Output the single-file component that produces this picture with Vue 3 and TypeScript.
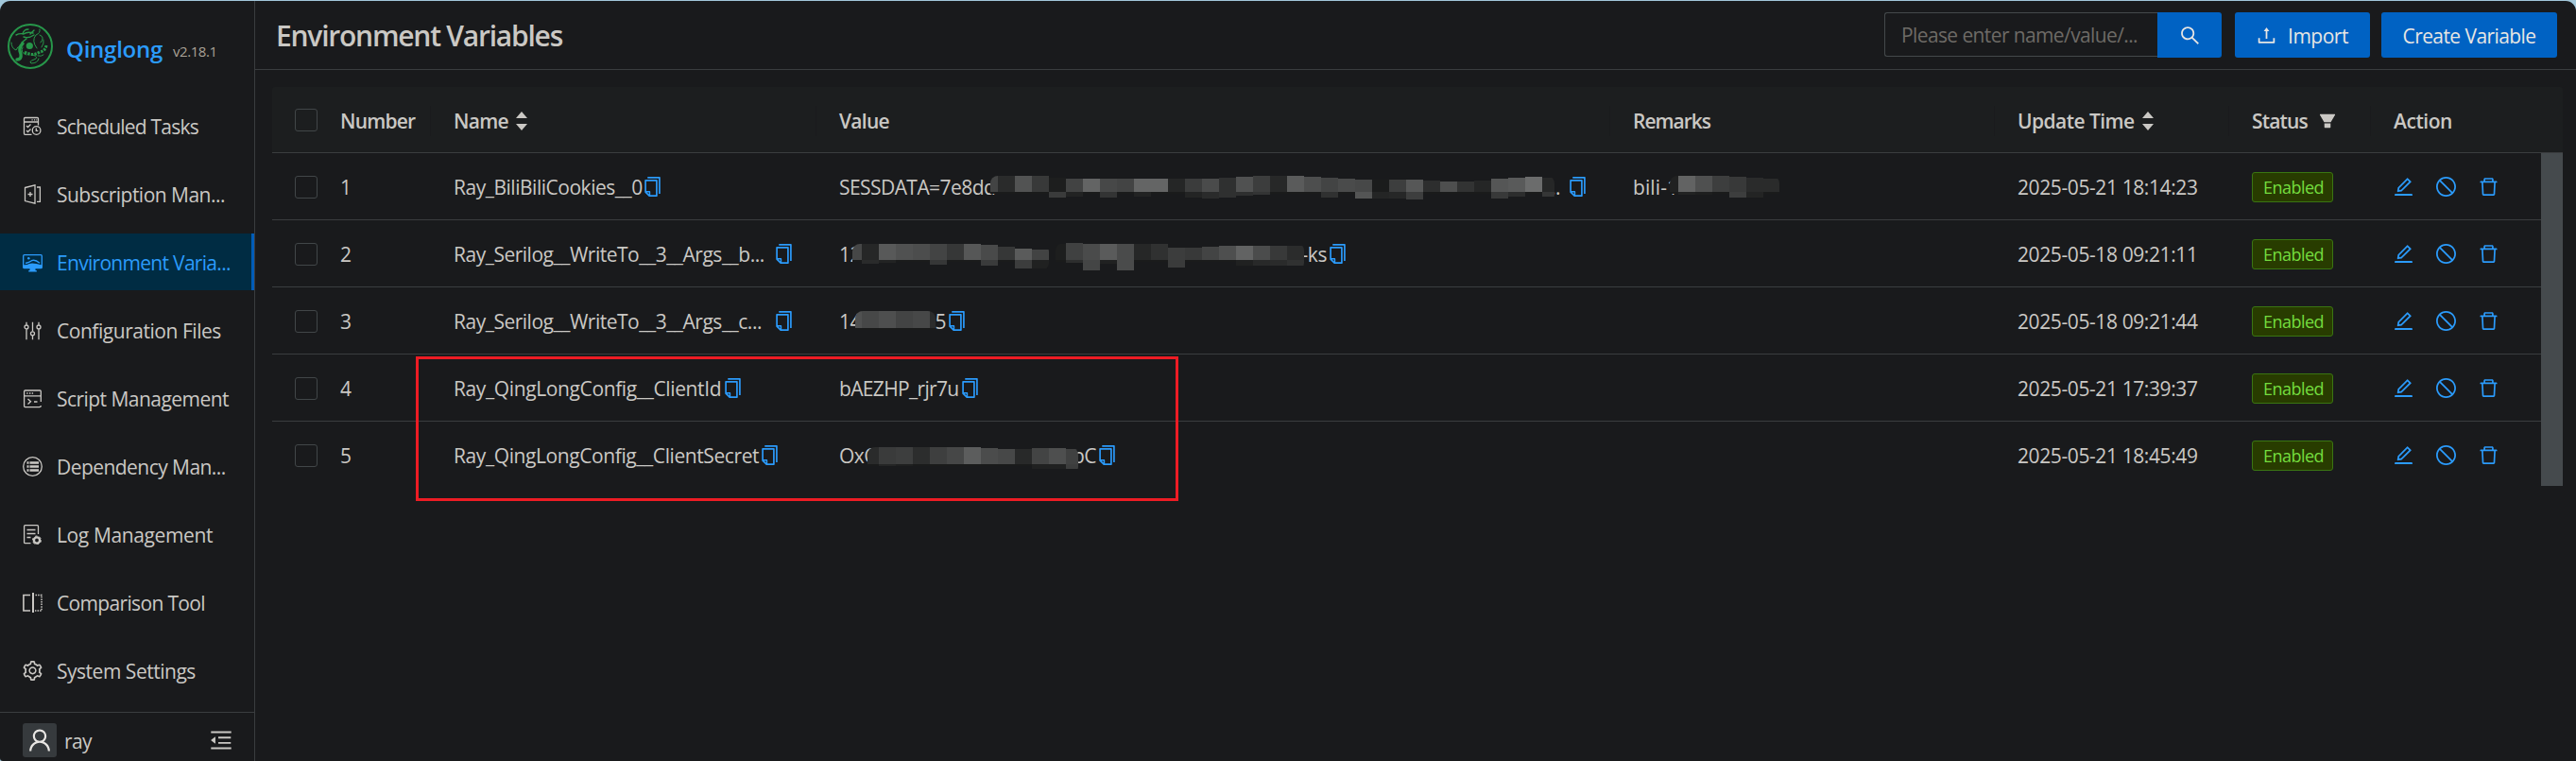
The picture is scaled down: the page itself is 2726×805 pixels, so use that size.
<script setup lang="ts">
interface MenuItem { key: string; label: string; ls: number }
/** One pixelated block: [gray level, top inset, lower gray level, lower height] */
type Block = [number, number, number?, number?]
interface Mosaic { x: number; top: number; lead: number; height: number; blocks: Block[]; tail: number }
interface Cell { head: string; ls: number; tail?: string; width?: number; gap?: number; mosaics?: Mosaic[] }
interface Row { name: Cell; value: Cell; remark?: Cell; time: string }

const menu: MenuItem[] = [
  { key: 'task', label: 'Scheduled Tasks', ls: -0.78 },
  { key: 'book', label: 'Subscription Man...', ls: -0.52 },
  { key: 'env', label: 'Environment Varia...', ls: -0.7 },
  { key: 'config', label: 'Configuration Files', ls: -0.46 },
  { key: 'script', label: 'Script Management', ls: -0.54 },
  { key: 'list', label: 'Dependency Man...', ls: -0.55 },
  { key: 'log', label: 'Log Management', ls: -0.38 },
  { key: 'diff', label: 'Comparison Tool', ls: -0.66 },
  { key: 'setting', label: 'System Settings', ls: -0.48 },
]
const active = 'env'

const rows: Row[] = [
  {
    name: { head: 'Ray_BiliBiliCookies__0', ls: -0.48, width: 200 },
    value: {
      head: 'SESSDATA=7e8dd', ls: -0.56, tail: '...', width: 763, gap: 8,
      mosaics: [{
        x: 160, top: 24, lead: 8, height: 17, tail: 13,
        blocks: [
          [67, 0], [42, 0], [82, 0], [56, 0], [29, 2, 58, 6], [66, 3, 34, 5], [99, 3], [71, 3, 51, 6], [67, 3], [100, 3, 34, 5], [100, 3],
          [37, 3], [59, 3, 35, 6], [74, 3, 42, 7], [47, 2, 47, 6], [80, 1, 46, 4], [60, 0, 51, 3], [39, 0], [90, 0], [77, 1],
          [67, 2, 48, 6], [74, 3], [71, 4, 84, 7], [27, 4, 36, 7], [61, 4, 38, 7], [86, 4, 61, 8], [45, 5], [78, 6], [50, 6],
          [37, 5], [85, 3, 56, 7], [89, 2, 44, 5], [107, 1], [38, 2, 53, 5],
        ],
      }],
    },
    remark: {
      head: 'bili-1', ls: 0.1,
      mosaics: [{ x: 39, top: 24, lead: 9, height: 17, tail: 17, blocks: [[32, 0], [98, 0, 34, 3], [79, 0, 30, 3], [61, 0], [56, 1, 61, 6], [42, 2, 35, 6], [42, 3]] }],
    },
    time: '2025-05-21 18:14:23',
  },
  {
    name: { head: 'Ray_Serilog__WriteTo__3__Args__b...', ls: -0.49, width: 329, gap: 10 },
    value: {
      head: '12', ls: -0.4, tail: '-ks', width: 516, gap: 1,
      mosaics: [
        { x: 14, top: 25, lead: 10, height: 17, tail: 18, blocks: [[70, 0], [38, 0, 42, 4], [88, 0, 34, 3], [80, 0], [76, 0], [67, 0, 54, 5], [54, 0], [86, 0], [73, 1, 58, 6], [54, 3], [90, 5, 60, 9], [66, 6, 32, 9]] },
        { x: 229, top: 24, lead: 11, height: 18, tail: 18, blocks: [[29, 1], [64, 0, 45, 3], [74, 1, 68, 11], [90, 1, 32, 4], [74, 1, 74, 11], [38, 1], [48, 1], [60, 5, 58, 8], [56, 5], [67, 4], [78, 3], [98, 3, 32, 6], [75, 3, 40, 6], [56, 3, 42, 6], [43, 3, 48, 6]] },
      ],
    },
    time: '2025-05-18 09:21:11',
  },
  {
    name: { head: 'Ray_Serilog__WriteTo__3__Args__c...', ls: -0.49, width: 329, gap: 10 },
    value: {
      head: '14', ls: -0.4, tail: '5', width: 113, gap: 1,
      mosaics: [{ x: 17, top: 25, lead: 7, height: 18, tail: 6, blocks: [[80, 0], [71, 0], [78, 0], [67, 0], [71, 0], [43, 0]] }],
    },
    time: '2025-05-18 09:21:44',
  },
  {
    name: { head: 'Ray_QingLongConfig__ClientId', ls: -0.38, width: 285 },
    value: { head: 'bAEZHP_rjr7u', ls: -0.66, width: 128 },
    time: '2025-05-21 17:39:37',
  },
  {
    name: { head: 'Ray_QingLongConfig__ClientSecret', ls: -0.41, width: 324 },
    value: {
      head: 'OxC', ls: -0.5, tail: 'pC', width: 272, gap: 1,
      mosaics: [{ x: 30, top: 27, lead: 12, height: 18, tail: 13, blocks: [[42, 0], [58, 0, 36, 2], [61, 0, 30, 2], [44, 0], [62, 0], [70, 0], [92, 0], [75, 1], [71, 2], [40, 2], [67, 1, 32, 5], [78, 1, 32, 5], [64, 2, 60, 5]] }],
    },
    time: '2025-05-21 18:45:49',
  },
]

const BLOCK = 18
const blockX = (m: Mosaic, i: number) => (i === 0 ? 0 : m.lead + (i - 1) * BLOCK)
const blockW = (m: Mosaic, i: number) => (i === 0 ? m.lead : i === m.blocks.length - 1 ? m.tail : BLOCK)
const mosaicW = (m: Mosaic) => m.lead + (m.blocks.length - 2) * BLOCK + m.tail
const shade = (g = 26) => `rgb(${g},${g + 1},${g + 1})`

const glyphs: Record<string, string> = {
  copy: 'M832 64H296c-4.4 0-8 3.6-8 8v56c0 4.4 3.6 8 8 8h496v688c0 4.4 3.6 8 8 8h56c4.4 0 8-3.6 8-8V96c0-17.7-14.3-32-32-32zM704 192H192c-17.7 0-32 14.3-32 32v530.7c0 8.5 3.4 16.6 9.4 22.6l173.3 173.3c2.2 2.2 4.7 4 7.4 5.5v1.9h4.2c3.5 1.3 7.2 2 11 2H704c17.7 0 32-14.3 32-32V224c0-17.7-14.3-32-32-32zM350 856.2L263.9 770H350v86.2zM664 888H414V746c0-22.1-17.9-40-40-40H232V264h432v624z',
  edit: 'M257.7 752c2 0 4-.2 6-.5L431.9 722c2-.4 3.9-1.3 5.3-2.8l423.9-423.9a9.96 9.96 0 000-14.1L694.9 114.9c-1.9-1.9-4.4-2.9-7.1-2.9s-5.2 1-7.1 2.9L256.8 538.8c-1.5 1.5-2.4 3.3-2.8 5.3l-29.5 168.2a33.5 33.5 0 009.4 29.8c6.6 6.4 14.9 9.9 23.8 9.9zm67.4-174.4L687.8 215l73.3 73.3-362.7 362.6-88.9 15.7 15.6-89zM880 836H144c-17.7 0-32 14.3-32 32v36c0 4.4 3.6 8 8 8h784c4.4 0 8-3.6 8-8v-36c0-17.7-14.3-32-32-32z',
  stop: 'M512 64C264.6 64 64 264.6 64 512s200.6 448 448 448 448-200.6 448-448S759.4 64 512 64zm0 820c-205.4 0-372-166.6-372-372 0-89 31.3-170.8 83.5-234.8l523.3 523.3C682.8 852.7 601 884 512 884zm288.5-137.2L277.2 223.5C341.2 171.3 423 140 512 140c205.4 0 372 166.6 372 372 0 89-31.3 170.8-83.5 234.8z',
  trash: 'M360 184h-8c4.4 0 8-3.6 8-8v8h304v-8c0 4.4 3.6 8 8 8h-8v72h72v-80c0-35.3-28.7-64-64-64H352c-35.3 0-64 28.7-64 64v80h72v-72zm504 72H160c-17.7 0-32 14.3-32 32v32c0 4.4 3.6 8 8 8h60.4l24.7 523c1.6 34.1 29.8 61 63.9 61h454c34.2 0 62.3-26.8 63.9-61l24.7-523H888c4.4 0 8-3.6 8-8v-32c0-17.7-14.3-32-32-32zM731.3 840H292.7l-24.2-512h487l-24.2 512z',
  search: 'M909.6 854.5L649.9 594.8C690.2 542.7 712 479 712 412c0-80.2-31.3-155.4-87.9-212.1-56.6-56.7-132-87.9-212.1-87.9s-155.5 31.3-212.1 87.9C143.2 256.5 112 331.8 112 412c0 80.1 31.3 155.5 87.9 212.1C256.5 680.8 331.8 712 412 712c67 0 130.6-21.8 182.7-62l259.7 259.6a8.2 8.2 0 0011.6 0l43.6-43.5a8.2 8.2 0 000-11.6zM570.4 570.4C528 612.7 471.8 636 412 636s-116-23.3-158.4-65.6C211.3 528 188 471.8 188 412s23.3-116.1 65.6-158.4C296 211.3 352.2 188 412 188s116.1 23.2 158.4 65.6S636 352.2 636 412s-23.3 116.1-65.6 158.4z',
  upload: 'M400 317.7h73.9V656c0 4.4 3.6 8 8 8h60c4.4 0 8-3.6 8-8V317.7H624c6.7 0 10.4-7.7 6.3-12.9L518.3 163a8 8 0 00-12.6 0l-112 141.7c-4.1 5.3-.4 13 6.3 13zM878 626h-60c-4.4 0-8 3.6-8 8v154H214V634c0-4.4-3.6-8-8-8h-60c-4.4 0-8 3.6-8 8v198c0 17.7 14.3 32 32 32h684c17.7 0 32-14.3 32-32V634c0-4.4-3.6-8-8-8z',
  user: 'M858.5 763.6a374 374 0 00-80.6-119.5 375.63 375.63 0 00-119.5-80.6c-.4-.2-.8-.3-1.2-.5C719.5 518 760 444.7 760 362c0-137-111-248-248-248S264 225 264 362c0 82.7 40.5 156 102.8 201.1-.4.2-.8.3-1.2.5-44.8 18.9-85 46-119.5 80.6a375.63 375.63 0 00-80.6 119.5A371.7 371.7 0 00136 901.8a8 8 0 008 8.2h60c4.4 0 7.9-3.5 8-7.8 2-77.2 33-149.5 87.8-204.3 56.7-56.7 132-87.9 212.2-87.9s155.5 31.2 212.2 87.9C779 752.7 810 825 812 902.2c.1 4.4 3.6 7.8 8 7.8h60a8 8 0 008-8.2c-1-47.8-10.9-94.3-29.5-138.2zM512 534c-45.9 0-89.1-17.9-121.6-50.4S340 407.9 340 362c0-45.9 17.9-89.1 50.4-121.6S466.1 190 512 190s89.1 17.9 121.6 50.4S684 316.1 684 362c0 45.9-17.9 89.1-50.4 121.6S557.9 534 512 534z',
  fold: 'M408 442h480c4.4 0 8-3.6 8-8v-56c0-4.4-3.6-8-8-8H408c-4.4 0-8 3.6-8 8v56c0 4.4 3.6 8 8 8zm-8 204c0 4.4 3.6 8 8 8h480c4.4 0 8-3.6 8-8v-56c0-4.4-3.6-8-8-8H408c-4.4 0-8 3.6-8 8v56zm504-486H120c-4.4 0-8 3.6-8 8v56c0 4.4 3.6 8 8 8h784c4.4 0 8-3.6 8-8v-56c0-4.4-3.6-8-8-8zm0 632H120c-4.4 0-8 3.6-8 8v56c0 4.4 3.6 8 8 8h784c4.4 0 8-3.6 8-8v-56c0-4.4-3.6-8-8-8zM115.4 518.9L271.7 642c5.8 4.6 14.4.5 14.4-6.9V388.9c0-7.4-8.5-11.5-14.4-6.9L115.4 505.1a8.74 8.74 0 000 13.8z',
  filter: 'M349 838c0 17.7 14.2 32 31.8 32h262.4c17.6 0 31.8-14.3 31.8-32V642H349v196zm531.1-684H143.9c-24.5 0-39.8 26.7-27.5 48l221.3 376h348.8l221.3-376c12.1-21.3-3.2-48-27.7-48z',
  setting: 'M924.8 625.7l-65.5-56c3.1-19 4.7-38.4 4.7-57.8s-1.6-38.8-4.7-57.8l65.5-56a32.03 32.03 0 009.3-35.2l-.9-2.6a443.74 443.74 0 00-79.7-137.9l-1.8-2.1a32.12 32.12 0 00-35.1-9.5l-81.3 28.9c-30-24.6-63.5-44-99.7-57.6l-15.7-85a32.05 32.05 0 00-25.8-25.7l-2.7-.5c-52.1-9.4-106.9-9.4-159 0l-2.7.5a32.05 32.05 0 00-25.8 25.7l-15.8 85.4a351.86 351.86 0 00-99 57.4l-81.9-29.1a32 32 0 00-35.1 9.5l-1.8 2.1a446.02 446.02 0 00-79.7 137.9l-.9 2.6c-4.5 12.5-.8 26.5 9.3 35.2l66.3 56.6c-3.1 18.8-4.6 38-4.6 57.1 0 19.2 1.5 38.4 4.6 57.1L99 625.5a32.03 32.03 0 00-9.3 35.2l.9 2.6c18.1 50.4 44.9 96.9 79.7 137.9l1.8 2.1a32.12 32.12 0 0035.1 9.5l81.9-29.1c29.8 24.5 63.1 43.9 99 57.4l15.8 85.4a32.05 32.05 0 0025.8 25.7l2.7.5a449.4 449.4 0 00159 0l2.7-.5a32.05 32.05 0 0025.8-25.7l15.7-85a350 350 0 0099.7-57.6l81.3 28.9a32 32 0 0035.1-9.5l1.8-2.1c34.8-41.1 61.6-87.5 79.7-137.9l.9-2.6c4.5-12.3.8-26.3-9.3-35zM788.3 465.9c2.5 15.1 3.8 30.6 3.8 46.1s-1.3 31-3.8 46.1l-6.6 40.1 74.7 63.9a370.03 370.03 0 01-42.6 73.6L721 702.8l-31.4 25.8c-23.9 19.6-50.5 35-79.3 45.8l-38.1 14.3-17.9 97a377.5 377.5 0 01-85 0l-17.9-97.2-37.8-14.5c-28.5-10.8-55-26.2-78.7-45.7l-31.4-25.9-93.4 33.2c-17-22.9-31.2-47.6-42.6-73.6l75.5-64.5-6.5-40c-2.4-14.9-3.7-30.3-3.7-45.5 0-15.3 1.2-30.6 3.7-45.5l6.5-40-75.5-64.5c11.3-26.1 25.6-50.7 42.6-73.6l93.4 33.2 31.4-25.9c23.7-19.5 50.2-34.9 78.7-45.7l37.9-14.3 17.9-97.2c28.1-3.2 56.8-3.2 85 0l17.9 97 38.1 14.3c28.7 10.8 55.4 26.2 79.3 45.8l31.4 25.8 92.8-32.9c17 22.9 31.2 47.6 42.6 73.6L781.8 426l6.5 39.9zM512 326c-97.2 0-176 78.8-176 176s78.8 176 176 176 176-78.8 176-176-78.8-176-176-176zm79.2 255.2A111.6 111.6 0 01512 614c-29.9 0-58-11.7-79.2-32.8A111.6 111.6 0 01400 502c0-29.9 11.7-58 32.8-79.2C454 401.6 482.1 390 512 390c29.9 0 58 11.6 79.2 32.8A111.6 111.6 0 01624 502c0 29.9-11.7 58-32.8 79.2z',
}
</script>

<template>
  <div class="app">
    <aside class="sider">
      <div class="brand">
        <svg class="logo" viewBox="0 0 48 48" fill="none" stroke="currentColor" stroke-linecap="round">
          <circle cx="24" cy="24" r="23" stroke-width="2" />
          <circle cx="23.3" cy="23.5" r="3.6" fill="currentColor" stroke="none" />
          <path stroke-width="1.4" d="M9 12q4-2 8-1q4-3 10-1M16 11q1-5 6-5M17 14q5 2 11-2M20 16l-5 4M28 7l-4 4" />
          <path stroke-width="3.4" d="M16 21q-5 5-2 11q1 6-4 6" />
          <path stroke-width="3" stroke-dasharray="2.4 1.2" stroke-linecap="butt" d="M18 30q9 5 16 0q6-1 7-7" />
          <path stroke-width="1" d="M31 26q-6-8-1-14q5-2 4-6M35 20q5-6-1-8M36 25q3-4 2-8M4 20q0 6 5 8q1-4 5-4M27 33q7 3 1 5t-3 4q7 0 8-5M32 34q4 1 6-1M16 25q-3 6 4 8" />
        </svg>
        <span class="brand-name">Qinglong</span>
        <span class="brand-version">v2.18.1</span>
      </div>

      <nav class="menu">
        <a v-for="m in menu" :key="m.key" class="menu-item" :class="{ active: m.key === active }">
          <svg class="icon" viewBox="0 0 21 21" fill="none" stroke="currentColor" stroke-width="1.3">
            <template v-if="m.key === 'task'">
              <path d="M9.5 19.3H2.5q-1 0-1-1V2.5q0-1 1-1h13q1 0 1 1V9.5M1.5 6h15" />
              <path d="M9.5 3.8h1.2M12 3.8h1.2M14.3 3.8h1" />
              <path d="M4 10l1.5 1.5 3-3M4 15l1.5 1.5 3-3" />
              <circle cx="14.6" cy="15" r="4.3" /><path d="M14.3 12.6v2.8h2" />
            </template>
            <template v-else-if="m.key === 'book'">
              <path d="M2.5 3.5L13 .8v19.4L2.5 17.6zM15 3h3.4v15.4H15" />
              <path d="M5.5 10.5h5M8 8v5" />
            </template>
            <template v-else-if="m.key === 'env'">
              <rect x=".7" y="2.7" width="19.6" height="14" rx="1" />
              <path d="M1 13.3q3.5.2 6-1.2t7.5 0t5.5 1V16.7H1z" fill="currentColor" stroke="none" />
              <path d="M7.5 16.5h6v2.6h1.3v1.4H6.3v-1.4h1.2z" fill="currentColor" stroke="none" />
              <circle cx="6.3" cy="6.2" r="1.3" fill="currentColor" stroke="none" />
              <path d="M3 11.5q4-1 6.5-2.8q3.5-1.6 8.5 2.6" />
            </template>
            <template v-else-if="m.key === 'config'">
              <path d="M4 1.8v3M4 9.2v11M10.5 1.8v9.7M10.5 16v4.2M17 1.8v3M17 9.2v11" />
              <circle cx="4" cy="7" r="2" /><circle cx="10.5" cy="13.8" r="2" /><circle cx="17" cy="7" r="2" />
            </template>
            <template v-else-if="m.key === 'script'">
              <path d="M19.3 14V3q0-1-1-1H2.6q-1 0-1 1v15.6q0 1 1 1H17.8q1.500 0 1.500-1.600M1.600 7.800h17.700" />
              <path d="M4.200 5h1.400M7 5h1.400M9.700 5h1.400M5.500 11l3 2.700-3 2.700M12 14h3.500" />
            </template>
            <template v-else-if="m.key === 'list'">
              <circle cx="10.500" cy="10.500" r="9.800" />
              <path stroke-width="2.600" d="M4.500 6.500h2M7.500 6.500h9.500M4.500 10.500h2M7.500 10.500h9.500M4.500 14.500h2M7.500 14.500h9.500" />
            </template>
            <template v-else-if="m.key === 'log'">
              <path d="M8.500 19.700H2.600q-1 0-1-1V1.700q0-1 1-1H15.500q1 0 1 1V10M4.500 5.500h9M4.500 9.500h9M4.500 13.500h4" />
              <circle cx="15" cy="16.500" r="3.100" stroke-width="2.400" />
              <circle cx="15" cy="16.500" r="4.500" stroke-width="1" stroke-dasharray="2.350" />
            </template>
            <template v-else-if="m.key === 'diff'">
              <path stroke-width="1.600" d="M8 2.500H.9V19H8" />
              <path stroke-width="2" d="M11 0v21" />
              <path stroke-width="1.500" stroke-dasharray="1.500 1.100" d="M13.500 2.500H20V19H13" />
            </template>
            <svg v-else width="21" height="21" viewBox="64 64 896 896"><path :d="glyphs.setting" fill="currentColor" stroke="none" /></svg>
          </svg>
          <span :style="{ letterSpacing: m.ls + 'px' }">{{ m.label }}</span>
        </a>
      </nav>

      <div class="sider-foot">
        <span class="avatar"><svg class="icon-lg" viewBox="64 64 896 896"><path :d="glyphs.user" /></svg></span>
        <span class="user">ray</span>
        <svg class="icon-fold" viewBox="64 64 896 896"><path :d="glyphs.fold" /></svg>
      </div>
    </aside>

    <main class="main">
      <header class="page-head">
        <h1>Environment Variables</h1>
        <div class="tools">
          <div class="search">
            <div class="search-input">Please enter name/value/...</div>
            <button class="search-btn"><svg class="icon" viewBox="64 64 896 896"><path :d="glyphs.search" /></svg></button>
          </div>
          <button class="btn import"><svg class="icon" viewBox="64 64 896 896"><path :d="glyphs.upload" /></svg><span>Import</span></button>
          <button class="btn create"><span>Create Variable</span></button>
        </div>
      </header>

      <section class="table">
        <div class="grid thead">
          <div class="th check"><i class="checkbox" /></div>
          <div class="th num">Number</div>
          <div class="th name">Name
            <svg class="sorter" viewBox="0 0 12 20"><path d="M6 0l6 7H0zM0 13h12l-6 7z" /></svg>
          </div>
          <div class="th value">Value</div>
          <div class="th remark">Remarks</div>
          <div class="th time">Update Time
            <svg class="sorter" viewBox="0 0 12 20"><path d="M6 0l6 7H0zM0 13h12l-6 7z" /></svg>
          </div>
          <div class="th status">Status
            <svg class="filter" viewBox="64 64 896 896"><path :d="glyphs.filter" /></svg>
          </div>
          <div class="th action">Action</div>
        </div>

        <div class="tbody">
          <div class="rows">
            <div v-for="(r, i) in rows" :key="i" class="grid row">
              <div class="td check"><i class="checkbox" /></div>
              <div class="td">{{ i + 1 }}</div>
              <template v-for="(c, k) in [r.name, r.value, r.remark]" :key="k">
                <div class="td">
                  <template v-if="c">
                    <span class="text" :style="{ width: c.width ? c.width + 'px' : 'auto', letterSpacing: c.ls + 'px' }">
                      <span>{{ c.head }}</span><span v-if="c.tail">{{ c.tail }}</span>
                    </span>
                    <svg
                      v-for="m in c.mosaics" :key="m.x" class="mosaic" :width="mosaicW(m)" :height="m.height + 11"
                      :style="{ left: 24 + m.x + 'px', top: m.top + 'px' }" shape-rendering="crispEdges"
                    >
                      <template v-for="(b, n) in m.blocks" :key="n">
                        <rect :x="blockX(m, n)" :y="b[1]" :width="blockW(m, n)" :height="m.height - b[1]" :fill="shade(b[0])" />
                        <rect :x="blockX(m, n)" :y="m.height" :width="blockW(m, n)" :height="b[3] ?? 2" :fill="shade(b[2])" />
                      </template>
                    </svg>
                    <svg v-if="k < 2" class="icon link" :style="{ marginLeft: (c.gap ?? 0) + 'px' }" viewBox="64 64 896 896"><path :d="glyphs.copy" /></svg>
                  </template>
                </div>
              </template>
              <div class="td date">{{ r.time }}</div>
              <div class="td"><span class="tag">Enabled</span></div>
              <div class="td actions">
                <svg v-for="g in ['edit', 'stop', 'trash']" :key="g" class="icon link" viewBox="64 64 896 896"><path :d="glyphs[g]" /></svg>
              </div>
            </div>
          </div>
          <div class="scrollbar" />
        </div>
        <div class="highlight" />
      </section>
    </main>
  </div>
</template>

<style>
body { background: #a2c7da; }
</style>

<style scoped>
.app {
  box-sizing: border-box;
  display: flex;
  width: 2726px;
  height: 804px;
  margin-top: 1px;
  overflow: hidden;
  border-radius: 11px 11px 0 3px;
  background: #191a1c;
  color: #cac8c4;
  font: 21px/30px "Open Sans", "Noto Sans", sans-serif;
}
svg { flex: none; fill: currentColor; }
.icon { width: 21px; height: 21px; }
.link { color: #2b9bfb; }

.sider {
  box-sizing: border-box;
  display: flex;
  flex-direction: column;
  width: 270px;
  flex: none;
  border-right: 1px solid #3a3d3f;
}
.brand { display: flex; align-items: center; height: 96px; padding-left: 8px; }
.logo { width: 48px; height: 48px; fill: none; color: #27974a; }
.brand-name { margin: 5px 0 0 14px; color: #2b9bfb; font-size: 24px; font-weight: 600; letter-spacing: -0.25px; }
.brand-version { margin: 9px 0 0 11px; color: #a9a297; font-size: 15px; letter-spacing: -0.45px; }
.menu { display: flex; flex-direction: column; gap: 12px; padding-top: 6px; flex: 1; }
.menu-item {
  display: flex;
  align-items: center;
  gap: 15px;
  height: 60px;
  padding-left: 24px;
  white-space: nowrap;
}
.menu-item .icon { fill: none; }
.menu-item span { padding-top: 2px; }
.menu-item.active { background: #002c43; color: #2b9bfb; border-right: 3px solid #005cb8; }
.sider-foot {
  display: flex;
  align-items: center;
  height: 52px;
  box-sizing: border-box;
  padding: 7px 23px 0 24px;
  border-top: 1px solid #3a3d3f;
}
.avatar {
  display: flex;
  align-items: center;
  justify-content: center;
  width: 36px;
  height: 36px;
  border-radius: 3px;
  background: #363a3d;
  color: #e8e6e3;
}
.icon-lg { width: 26px; height: 26px; }
.user { margin: 2px 0 0 8px; letter-spacing: -0.59px; }
.icon-fold { width: 24px; height: 24px; margin-left: auto; }

.main { flex: 1; min-width: 0; }
.page-head {
  display: flex;
  align-items: center;
  justify-content: space-between;
  height: 72px;
  padding: 0 20px 0 22px;
  border-bottom: 1px solid #3a3d3f;
}
h1 { margin: 2px 0 0; font-size: 30px; font-weight: 600; letter-spacing: -1.23px; line-height: 40px; }
.tools { display: flex; }
.search { display: flex; margin-right: 14px; }
.search-input {
  box-sizing: border-box;
  width: 289px;
  height: 47px;
  padding: 8px 0 0 17px;
  border: 1px solid #44494b;
  border-right: 0;
  border-radius: 3px 0 0 3px;
  color: #6d6a66;
  letter-spacing: -0.61px;
  white-space: nowrap;
}
button {
  display: flex;
  align-items: center;
  justify-content: center;
  height: 48px;
  padding: 0;
  border: 0;
  border-radius: 3px;
  background: #0062c3;
  color: #e8e6e3;
  font: inherit;
}
.search-btn { width: 68px; border-radius: 0 3px 3px 0; }
.import { width: 143px; gap: 12px; margin-right: 12px; letter-spacing: -0.48px; }
.create { width: 186px; letter-spacing: -0.58px; }
.btn span { padding-top: 2px; }

.table { position: relative; width: 2424px; margin: 18px 0 0 18px; }
.grid { display: grid; grid-template-columns: 48px 120px 408px 840px 407px 248px 150px 180px; }
.thead {
  height: 69px;
  width: 2424px;
  border-radius: 3px 3px 0 0;
  border-bottom: 1px solid #3a3d3f;
  background: #1c1e1f;
  box-sizing: content-box;
  font-weight: 600;
}
.th, .td { display: flex; align-items: center; padding-left: 24px; white-space: nowrap; }
.th { position: relative; padding-top: 2px; }
.th:not(.check, .action)::after {
  content: "";
  position: absolute;
  top: 20px;
  right: 0;
  width: 1px;
  height: 32px;
  background: #1a1b1d;
}
.th.num { letter-spacing: -0.78px; }
.th.name { letter-spacing: -0.69px; }
.th.value { letter-spacing: -0.71px; }
.th.remark { letter-spacing: -1.01px; }
.th.time { letter-spacing: -0.55px; }
.th.status { letter-spacing: -0.82px; }
.th.action { letter-spacing: -0.44px; }
.sorter { width: 12px; height: 20px; margin-left: 8px; }
.th.check .checkbox { margin-top: -1px; }
.filter { width: 18px; height: 18px; margin-left: 12px; }
.checkbox { width: 22px; height: 22px; border: 1px solid #414648; border-radius: 3px; }

.tbody { display: flex; height: 352px; overflow: hidden; }
.rows { width: 2401px; flex: none; }
.row { height: 70px; border-bottom: 1px solid #3a3d3f; }
.td { position: relative; padding-top: 1px; }
.text { display: flex; justify-content: space-between; padding-top: 1px; }
.date { padding-top: 2px; letter-spacing: -0.4px; }
.mosaic { position: absolute; border-radius: 8px; }
.scrollbar { width: 23px; background: #454a4d; }
.tag {
  box-sizing: border-box;
  width: 86px;
  height: 32px;
  padding-left: 11px;
  border: 1px solid #3a7512;
  border-radius: 3px;
  background: #283c00;
  color: #74dc3e;
  font-size: 18px;
  line-height: 30px;
  letter-spacing: -0.53px;
}
.actions { gap: 24px; }
.highlight {
  position: absolute;
  left: 152px;
  top: 285px;
  width: 801px;
  height: 147px;
  border: 3px solid #ed1c24;
}
</style>
